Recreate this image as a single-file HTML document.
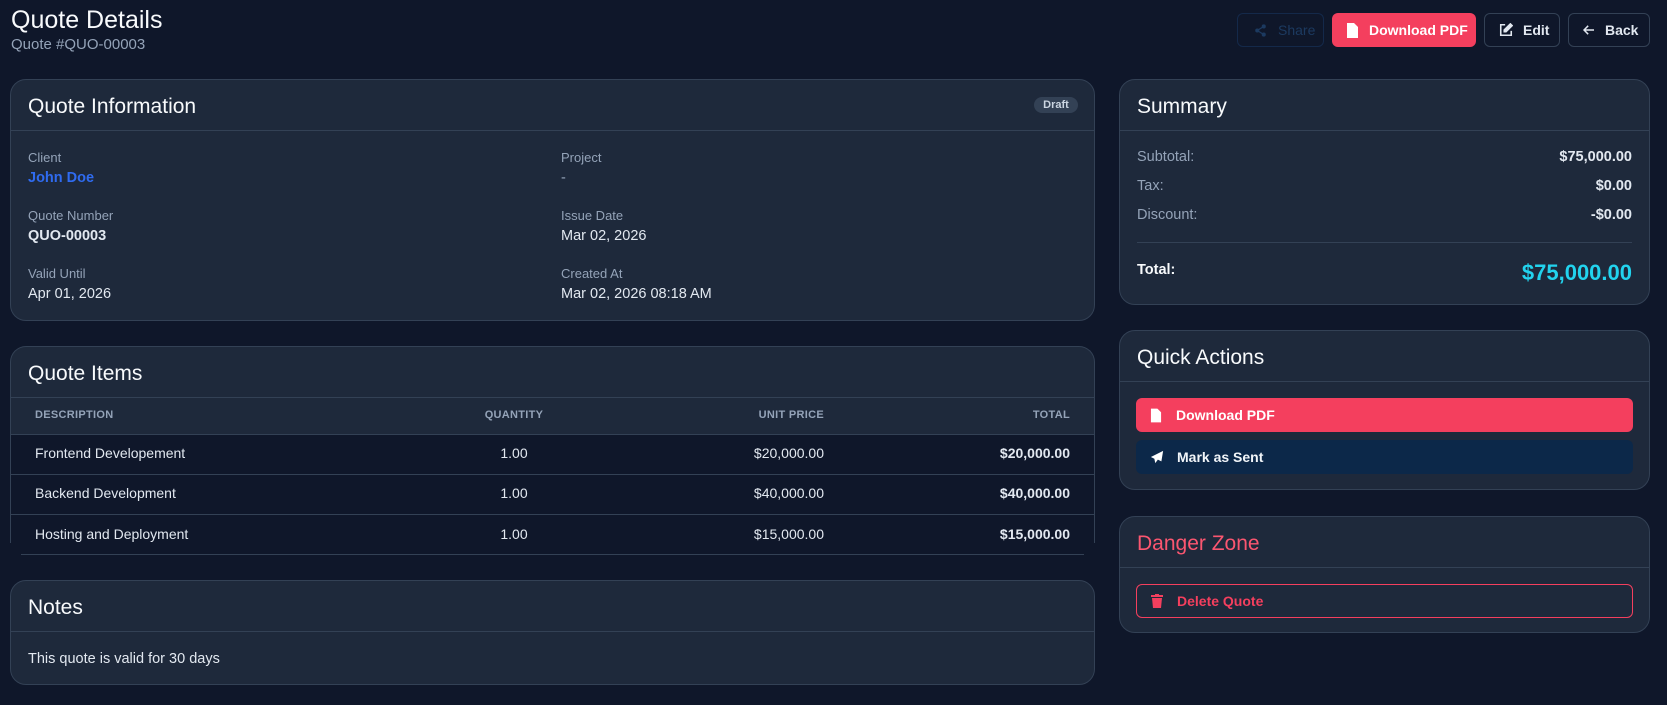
<!DOCTYPE html>
<html><head><meta charset="utf-8"><style>
*{box-sizing:border-box;margin:0;padding:0}
body{width:1667px;height:705px;background:#0f172a;font-family:"Liberation Sans",sans-serif;color:#e2e8f0;position:relative;overflow:hidden}
.a{position:absolute;white-space:nowrap}
.card{position:absolute;background:#1e293b;border:1px solid #334155;border-radius:16px}
.hl{position:absolute;left:0;right:0;height:1px;background:#334155}
.h{position:absolute;font-size:21px;color:#f8fafc}
.lab{font-size:13px;color:#94a3b8}
.val{font-size:14.5px;color:#e2e8f0}
.btn{position:absolute;border-radius:6px;font-size:14px;font-weight:bold;display:flex;align-items:center}
.th{font-size:11px;font-weight:bold;color:#94a3b8;letter-spacing:.3px}
.td{font-size:14px;color:#e2e8f0}
</style></head><body>
<div class="a" style="left:11px;top:6px;font-size:25px;color:#f8fafc">Quote Details</div>
<div class="a" style="left:11px;top:36px;font-size:15px;color:#94a3b8">Quote #QUO-00003</div>

<div class="btn" style="left:1237px;top:13px;width:87px;height:34px;border:1px solid #14294a;color:#1c3a60;padding-left:16px">
<svg width="13" height="13" viewBox="0 0 16 16" fill="#1c3a60"><circle cx="12" cy="3" r="2.5"/><circle cx="4" cy="8" r="2.5"/><circle cx="12" cy="13" r="2.5"/><path d="M4 8L12 3M4 8l8 5" stroke="#1c3a60" stroke-width="1.5"/></svg><span style="margin-left:11px;font-weight:normal">Share</span></div>
<div class="btn" style="left:1332px;top:13px;width:144px;height:34px;background:#f43f5e;color:#fff;padding-left:14px">
<svg width="13" height="15" viewBox="0 0 13 15" fill="#fff"><path d="M1 0h7l4 4v11H1z"/></svg><span style="margin-left:10px">Download PDF</span></div>
<div class="btn" style="left:1484px;top:13px;width:76px;height:34px;border:1px solid #334155;color:#e2e8f0;padding-left:14px">
<svg width="14" height="14" viewBox="0 0 16 16" fill="none" stroke="#e2e8f0" stroke-width="1.8"><path d="M7 2H2v12h12V9"/><path d="M13 1l2 2-7 7H6V8z" fill="#e2e8f0"/></svg><span style="margin-left:10px">Edit</span></div>
<div class="btn" style="left:1568px;top:13px;width:82px;height:34px;border:1px solid #334155;color:#e2e8f0;padding-left:14px">
<svg width="12" height="10" viewBox="0 0 14 12" fill="none" stroke="#e2e8f0" stroke-width="1.8"><path d="M13 6H2M6 1L1 6l5 5"/></svg><span style="margin-left:10px">Back</span></div>

<!-- Quote Information -->
<div class="card" style="left:10px;top:79px;width:1085px;height:242px">
<div class="h" style="left:17px;top:15px">Quote Information</div>
<div class="a" style="left:1023px;top:17px;width:44px;height:16px;background:#334155;border-radius:8px;font-size:11px;font-weight:bold;color:#cbd5e1;text-align:center;line-height:16px">Draft</div>
<div class="hl" style="top:50px"></div>
<div class="a lab" style="left:17px;top:70px">Client</div>
<div class="a val" style="left:17px;top:90px;color:#2f6bf0;font-weight:bold">John Doe</div>
<div class="a lab" style="left:550px;top:70px">Project</div>
<div class="a val" style="left:550px;top:90px;color:#94a3b8">-</div>
<div class="a lab" style="left:17px;top:128px">Quote Number</div>
<div class="a val" style="left:17px;top:148px;font-weight:bold">QUO-00003</div>
<div class="a lab" style="left:550px;top:128px">Issue Date</div>
<div class="a val" style="left:550px;top:148px">Mar 02, 2026</div>
<div class="a lab" style="left:17px;top:186px">Valid Until</div>
<div class="a val" style="left:17px;top:206px">Apr 01, 2026</div>
<div class="a lab" style="left:550px;top:186px">Created At</div>
<div class="a val" style="left:550px;top:206px">Mar 02, 2026 08:18 AM</div>
</div>

<!-- Quote Items -->
<div class="card" style="left:10px;top:346px;width:1085px;height:197px;border-bottom:none;border-radius:16px 16px 0 0;overflow:hidden">
<div class="h" style="left:17px;top:15px">Quote Items</div>
<div class="hl" style="top:50px"></div>
<div style="position:absolute;left:0;right:0;top:88px;bottom:0;background:#0f172a"></div>
<div class="hl" style="top:87px"></div>
<div class="hl" style="top:127px"></div>
<div class="hl" style="top:167px"></div>
<div class="a th" style="left:24px;top:62px">DESCRIPTION</div>
<div class="a th" style="left:453px;top:62px;width:100px;text-align:center">QUANTITY</div>
<div class="a th" style="right:270px;top:62px">UNIT PRICE</div>
<div class="a th" style="right:24px;top:62px">TOTAL</div>
<div class="a td" style="left:24px;top:98px">Frontend Developement</div>
<div class="a td" style="left:453px;top:98px;width:100px;text-align:center">1.00</div>
<div class="a td" style="right:270px;top:98px">$20,000.00</div>
<div class="a td" style="right:24px;top:98px;font-weight:bold">$20,000.00</div>
<div class="a td" style="left:24px;top:138px">Backend Development</div>
<div class="a td" style="left:453px;top:138px;width:100px;text-align:center">1.00</div>
<div class="a td" style="right:270px;top:138px">$40,000.00</div>
<div class="a td" style="right:24px;top:138px;font-weight:bold">$40,000.00</div>
<div class="a td" style="left:24px;top:179px">Hosting and Deployment</div>
<div class="a td" style="left:453px;top:179px;width:100px;text-align:center">1.00</div>
<div class="a td" style="right:270px;top:179px">$15,000.00</div>
<div class="a td" style="right:24px;top:179px;font-weight:bold">$15,000.00</div>
</div>
<div class="a" style="left:21px;top:554px;width:1063px;height:1px;background:#334155"></div>

<!-- Notes -->
<div class="card" style="left:10px;top:580px;width:1085px;height:105px">
<div class="h" style="left:17px;top:15px">Notes</div>
<div class="hl" style="top:50px"></div>
<div class="a" style="left:17px;top:70px;font-size:14.5px;color:#e2e8f0">This quote is valid for 30 days</div>
</div>

<!-- Summary -->
<div class="card" style="left:1119px;top:79px;width:531px;height:226px">
<div class="h" style="left:17px;top:15px">Summary</div>
<div class="hl" style="top:50px"></div>
<div class="a" style="left:17px;top:69px;font-size:14.5px;color:#94a3b8">Subtotal:</div>
<div class="a" style="right:17px;top:69px;font-size:14.5px;font-weight:bold;color:#e2e8f0">$75,000.00</div>
<div class="a" style="left:17px;top:98px;font-size:14.5px;color:#94a3b8">Tax:</div>
<div class="a" style="right:17px;top:98px;font-size:14.5px;font-weight:bold;color:#e2e8f0">$0.00</div>
<div class="a" style="left:17px;top:127px;font-size:14.5px;color:#94a3b8">Discount:</div>
<div class="a" style="right:17px;top:127px;font-size:14.5px;font-weight:bold;color:#e2e8f0">-$0.00</div>
<div class="a" style="left:17px;right:17px;top:162px;height:1px;background:#334155"></div>
<div class="a" style="left:17px;top:182px;font-size:14.5px;font-weight:bold;color:#f8fafc">Total:</div>
<div class="a" style="right:17px;top:180px;font-size:22px;font-weight:bold;color:#22d3ee">$75,000.00</div>
</div>

<!-- Quick Actions -->
<div class="card" style="left:1119px;top:330px;width:531px;height:160px">
<div class="h" style="left:17px;top:15px">Quick Actions</div>
<div class="hl" style="top:50px"></div>
<div class="btn" style="left:16px;top:67px;width:497px;height:34px;background:#f43f5e;color:#fff;padding-left:14px">
<svg width="12" height="15" viewBox="0 0 13 15" fill="#fff"><path d="M1 0h7l4 4v11H1z"/></svg><span style="margin-left:14px">Download PDF</span></div>
<div class="btn" style="left:16px;top:109px;width:497px;height:34px;background:#0c2849;color:#f1f5f9;padding-left:14px">
<svg width="14" height="14" viewBox="0 0 16 16" fill="#fff"><path d="M15 1L1 8l4 2 1 5 3-4 4 2z"/></svg><span style="margin-left:13px">Mark as Sent</span></div>
</div>

<!-- Danger Zone -->
<div class="card" style="left:1119px;top:516px;width:531px;height:117px">
<div class="h" style="left:17px;top:15px;color:#fb5670">Danger Zone</div>
<div class="hl" style="top:50px"></div>
<div class="btn" style="left:16px;top:67px;width:497px;height:34px;border:1px solid #f43f5e;color:#f43f5e;padding-left:14px">
<svg width="12" height="14" viewBox="0 0 12 14" fill="#f43f5e"><rect x="0" y="1" width="12" height="2"/><rect x="4" y="0" width="4" height="2"/><path d="M1 4h10l-1 10H2z"/></svg><span style="margin-left:14px">Delete Quote</span></div>
</div>
</body></html>
